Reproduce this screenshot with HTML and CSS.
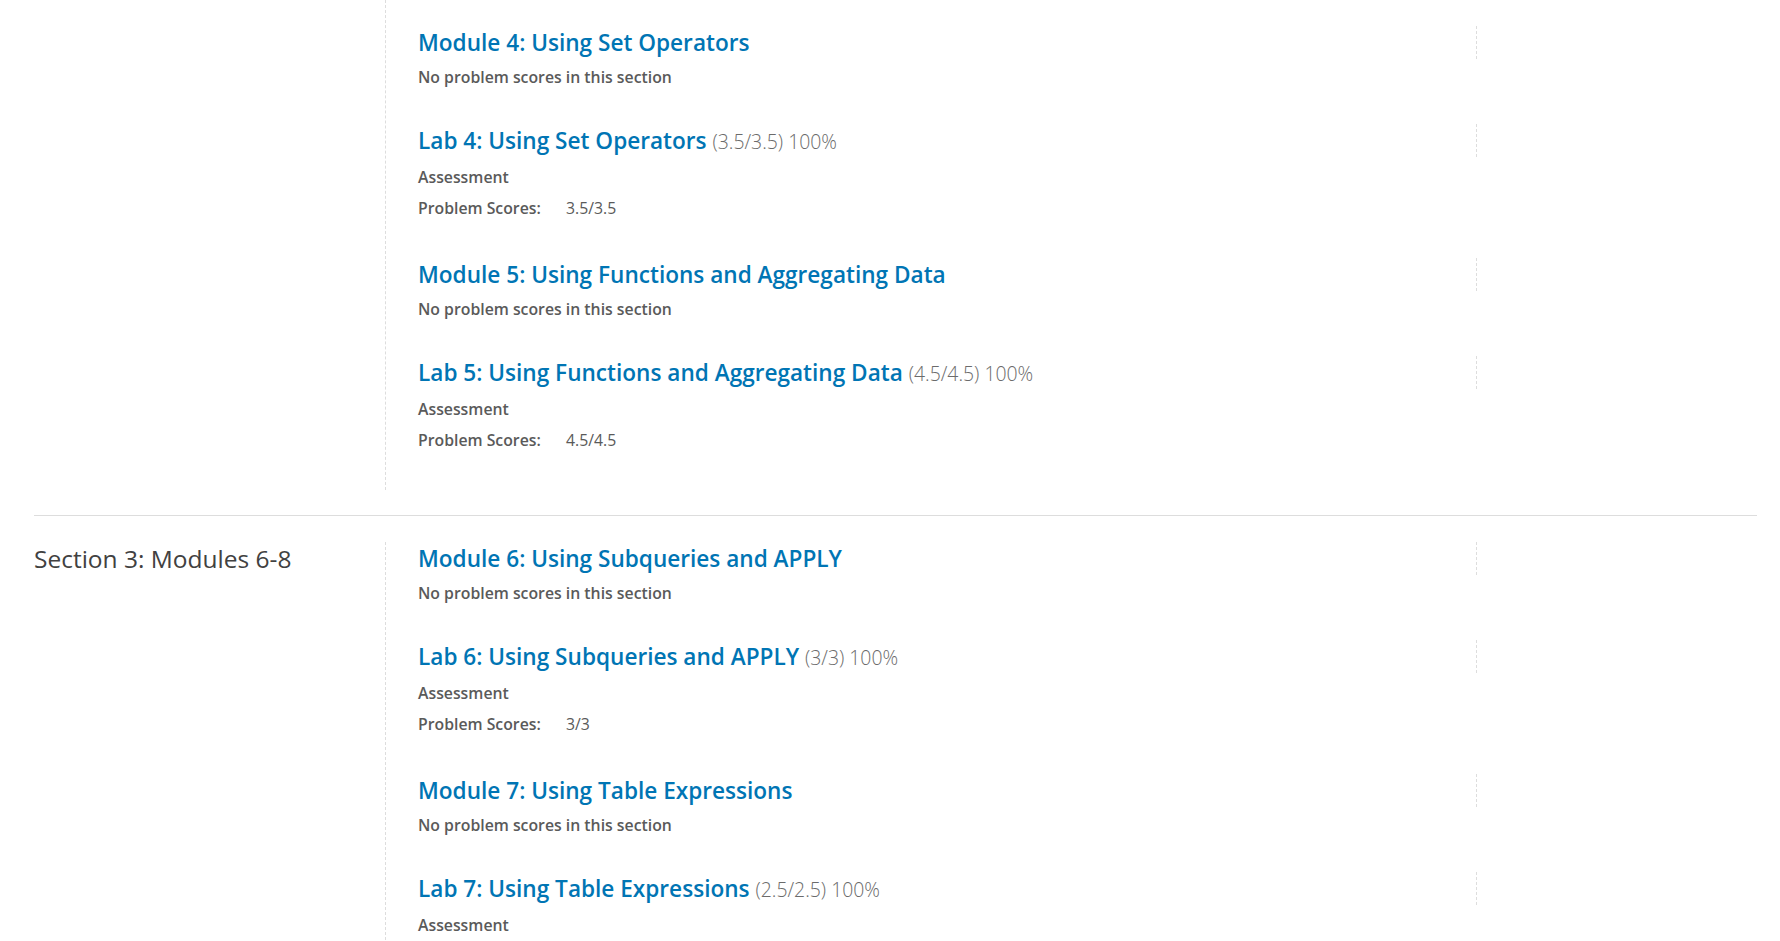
FILE: index.html
```html
<!DOCTYPE html>
<html lang="en">
<head>
<meta charset="utf-8">
<title>Progress</title>
<link rel="stylesheet" href="styles.css">
</head>
<body>
<main class="chapters">
  <section class="chapter chapter-cut">
    <h2 class="chapter-name"></h2>
    <div class="sections">
      <div class="item module">
        <div class="item-head"><h3 class="item-title"><a href="#">Module 4: Using Set Operators</a></h3></div>
        <p class="note">No problem scores in this section</p>
      </div>
      <div class="item lab">
        <div class="item-head"><h3 class="item-title"><a href="#">Lab 4: Using Set Operators</a> <span class="score">(3.5/3.5) 100%</span></h3></div>
        <p class="note">Assessment</p>
        <dl class="scores"><dt>Problem Scores:</dt><dd>3.5/3.5</dd></dl>
      </div>
      <div class="item module">
        <div class="item-head"><h3 class="item-title"><a href="#">Module 5: Using Functions and Aggregating Data</a></h3></div>
        <p class="note">No problem scores in this section</p>
      </div>
      <div class="item lab">
        <div class="item-head"><h3 class="item-title"><a href="#">Lab 5: Using Functions and Aggregating Data</a> <span class="score">(4.5/4.5) 100%</span></h3></div>
        <p class="note">Assessment</p>
        <dl class="scores"><dt>Problem Scores:</dt><dd>4.5/4.5</dd></dl>
      </div>
    </div>
  </section>
  <section class="chapter">
    <h2 class="chapter-name">Section 3: Modules 6-8</h2>
    <div class="sections">
      <div class="item module">
        <div class="item-head"><h3 class="item-title"><a href="#">Module 6: Using Subqueries and APPLY</a></h3></div>
        <p class="note">No problem scores in this section</p>
      </div>
      <div class="item lab">
        <div class="item-head"><h3 class="item-title"><a href="#">Lab 6: Using Subqueries and APPLY</a> <span class="score">(3/3) 100%</span></h3></div>
        <p class="note">Assessment</p>
        <dl class="scores"><dt>Problem Scores:</dt><dd>3/3</dd></dl>
      </div>
      <div class="item module">
        <div class="item-head"><h3 class="item-title"><a href="#">Module 7: Using Table Expressions</a></h3></div>
        <p class="note">No problem scores in this section</p>
      </div>
      <div class="item lab">
        <div class="item-head"><h3 class="item-title"><a href="#">Lab 7: Using Table Expressions</a> <span class="score">(2.5/2.5) 100%</span></h3></div>
        <p class="note">Assessment</p>
      </div>
    </div>
  </section>
</main>
</body>
</html>
```

FILE: styles.css
```css
html, body {
  margin: 0;
  padding: 0;
  background: #ffffff;
  height: 941px;
  overflow: hidden;
}
body {
  font-family: "Open Sans", "Noto Sans", sans-serif;
  color: #5a5a5a;
}
.chapters {
  padding: 0 23px 0 34px;
}
.chapter {
  display: grid;
  grid-template-columns: 351px 1fr;
  margin-top: 26px;
}
.chapter-cut {
  margin-top: 0;
  border-bottom: 1px solid #dddddd;
  padding-bottom: 25px;
}
.chapter-cut .sections {
  padding-top: 26px;
}
.chapter-name {
  margin: 0;
  font-size: 24.5px;
  font-weight: 400;
  line-height: 33px;
  color: #414141;
}
.sections {
  border-left: 1px dashed #dddddd;
  padding-left: 32px;
}
.item {
  padding-bottom: 36px;
}
.item.lab {
  padding-bottom: 39px;
}
.item-head {
  width: 1058px;
  height: 33px;
  border-right: 1px dashed #dddddd;
}
.item-title {
  margin: 0;
  font-size: 22.6px;
  line-height: 33px;
  font-weight: 600;
  white-space: nowrap;
}
.item-title a {
  color: #0075b4;
  text-decoration: none;
}
.score {
  font-weight: 300;
  font-size: 19.4px;
  color: #6b6b6b;
}
.note {
  margin: 7px 0 0;
  font-size: 15.8px;
  line-height: 22px;
  font-weight: 600;
  color: #5a5a5a;
}
.lab .note {
  margin-top: 9px;
}
.scores {
  display: flex;
  margin: 9px 0 0;
  font-size: 15.8px;
  line-height: 22px;
}
.scores dt {
  font-weight: 600;
  width: 148px;
}
.scores dd {
  margin: 0;
  font-weight: 400;
}
```
